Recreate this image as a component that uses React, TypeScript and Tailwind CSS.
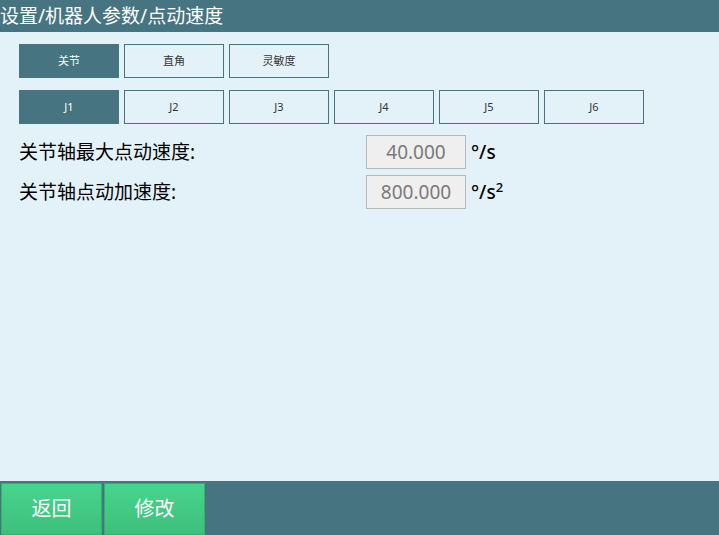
import React, { useState } from 'react';

const FONT = '"Noto Sans", "Noto Sans CJK SC", sans-serif';

const modes = ['关节', '直角', '灵敏度'];
const joints = ['J1', 'J2', 'J3', 'J4', 'J5', 'J6'];

type TabProps = { label: string; active: boolean; onClick: () => void };

const Tab: React.FC<TabProps> = ({ label, active, onClick }) => (
  <button
    onClick={onClick}
    className={
      active
        ? 'w-[100px] h-[34px] flex items-center justify-center text-[11px] bg-[#477481] text-white border border-[#477481]'
        : 'w-[100px] h-[34px] flex items-center justify-center text-[11px] bg-transparent text-[#333] border border-[#477481]'
    }
  >
    {label}
  </button>
);

type RowProps = { label: string; value: string; unit: React.ReactNode };

const ParamRow: React.FC<RowProps> = ({ label, value, unit }) => (
  <div className="flex items-center h-[34px]">
    <div className="w-[347px] text-[19px] text-black">{label}</div>
    <div className="w-[100px] h-[34px] flex items-center justify-center bg-[#efefef] border border-[#b8b8b8] text-[19px] text-[#7a7a7a]">
      {value}
    </div>
    <div className="ml-[5px] text-[19px] font-medium text-black">{unit}</div>
  </div>
);

export default function App() {
  const [mode, setMode] = useState(0);
  const [joint, setJoint] = useState(0);

  return (
    <div
      className="w-[719px] h-[535px] flex flex-col bg-[#e3f2f8]"
      style={{ fontFamily: FONT }}
    >
      <div className="h-[32px] bg-[#477481] text-white text-[19px] leading-[32px]">
        设置/机器人参数/点动速度
      </div>

      <div className="flex-1 px-[19px] pt-[12px]">
        <div className="flex gap-[5px]">
          {modes.map((m, i) => (
            <Tab key={m} label={m} active={mode === i} onClick={() => setMode(i)} />
          ))}
        </div>
        <div className="flex gap-[5px] mt-[12px]">
          {joints.map((j, i) => (
            <Tab key={j} label={j} active={joint === i} onClick={() => setJoint(i)} />
          ))}
        </div>

        <div className="flex flex-col gap-[6px] mt-[11px]">
          <ParamRow label="关节轴最大点动速度:" value="40.000" unit="°/s" />
          <ParamRow
            label="关节轴点动加速度:"
            value="800.000"
            unit={
              <span>
                °/s<sup className="text-[13px] -top-[7px]">2</sup>
              </span>
            }
          />
        </div>
      </div>

      <div className="h-[54px] bg-[#477481] flex items-end gap-[2px] pl-[1px]">
        <button className="w-[101px] h-[52px] bg-gradient-to-b from-[#48d48c] to-[#3dc07c] border border-[#35b070] text-white text-[20px]">
          返回
        </button>
        <button className="w-[101px] h-[52px] bg-gradient-to-b from-[#48d48c] to-[#3dc07c] border border-[#35b070] text-white text-[20px]">
          修改
        </button>
      </div>
    </div>
  );
}
